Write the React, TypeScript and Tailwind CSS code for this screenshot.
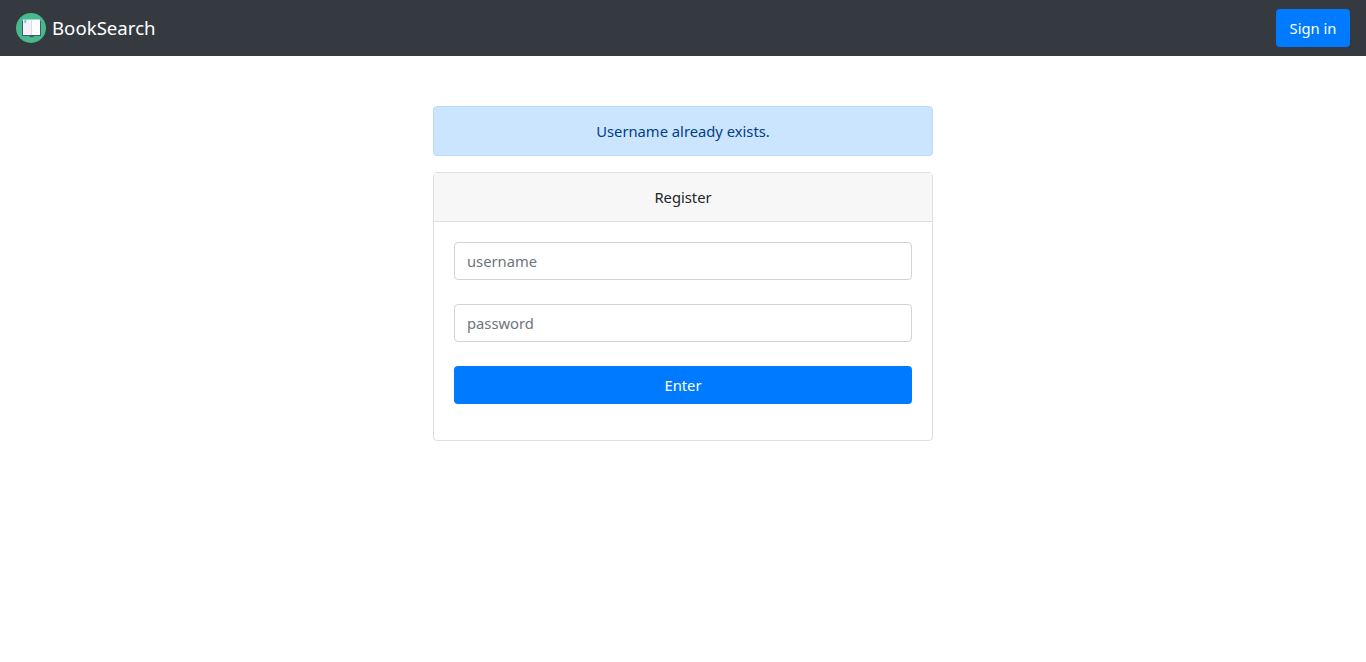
import React from "react";

function Logo() {
  return (
    <svg width="30" height="30" viewBox="0 0 30 30" className="shrink-0">
      <circle cx="15" cy="15" r="15" fill="#48b98c" />
      <path d="M6 8h19v15H6z" fill="#4a5470" />
      <path d="M13.5 23h4v1.2h-4z" fill="#4a5470" />
      <path d="M7 6.5h8.5v15.5H7z" fill="#f1f3f8" />
      <path d="M15.5 6.5H24V22h-8.5z" fill="#ffffff" />
      <path d="M8.4 6.5h1.8v4l-.9-.8-.9.8z" fill="#6cc0ee" />
      <path d="M15.2 6.5h.6V22h-.6z" fill="#dde1e9" />
    </svg>
  );
}

export default function App() {
  return (
    <div className="min-h-[662px] bg-white font-['Noto_Sans',sans-serif] text-[14.75px] text-[#212529]">
      <nav className="flex h-14 items-center justify-between bg-[#343a40] px-4">
        <a className="flex items-center gap-1.5 text-[18.65px] text-white">
          <Logo />
          <span>BookSearch</span>
        </a>
        <button className="h-[38px] w-[74px] rounded bg-[#007bff] text-white">Sign in</button>
      </nav>

      <main className="mx-auto flex w-[500px] flex-col gap-4 pt-[50px]">
        <div className="flex h-[50px] items-center justify-center rounded border border-[#b8daff] bg-[#cce5ff] text-[#004085]">
          Username already exists.
        </div>

        <div className="flex h-[269px] flex-col rounded border border-[#dfdfdf] bg-white">
          <div className="flex h-[49px] items-center justify-center border-b border-[#dfdfdf] bg-[#f7f7f7]">
            Register
          </div>
          <form className="flex flex-col gap-6 px-5 pt-5">
            <input
              placeholder="username"
              className="h-[38px] rounded border border-[#ced4da] px-3 placeholder:text-[#6c757d] focus:outline-none"
            />
            <input
              placeholder="password"
              className="h-[38px] rounded border border-[#ced4da] px-3 placeholder:text-[#6c757d] focus:outline-none"
            />
            <button type="button" className="h-[38px] rounded bg-[#007bff] text-white">
              Enter
            </button>
          </form>
        </div>
      </main>
    </div>
  );
}
